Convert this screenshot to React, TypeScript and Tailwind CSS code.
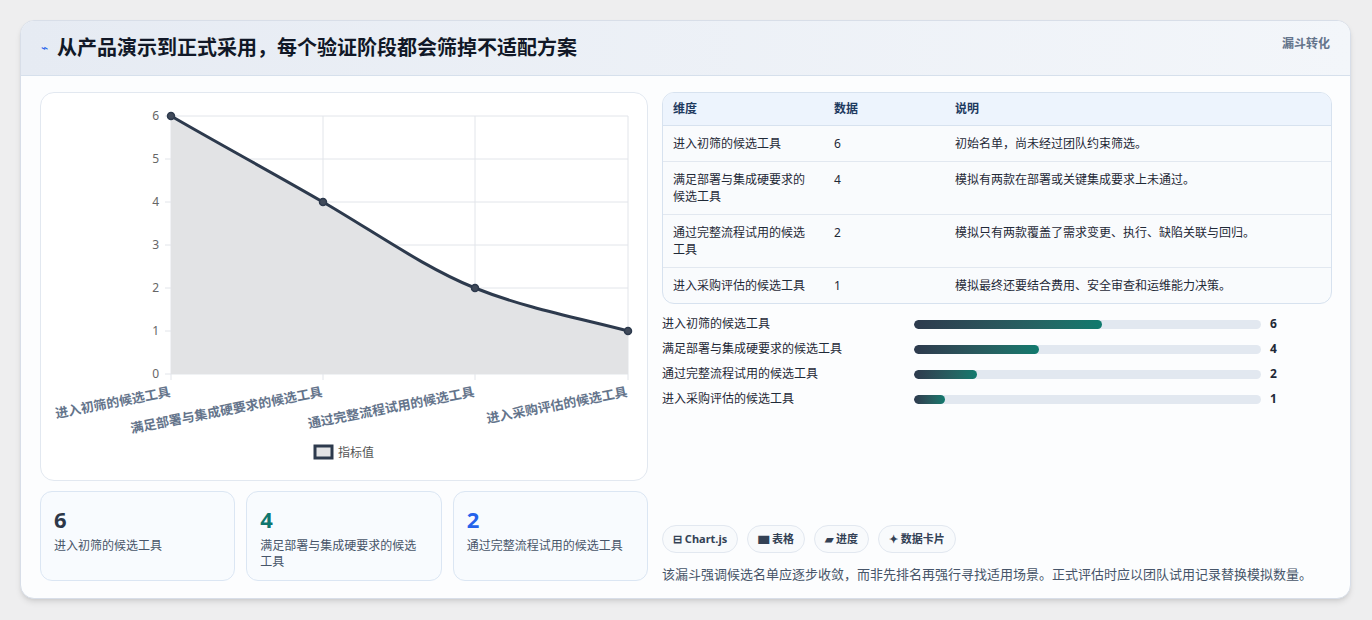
import React from "react";

const F = { fontFamily: '"Noto Sans","Noto Sans CJK SC",sans-serif' };
const rows = [
  ["进入初筛的候选工具", 6, "初始名单，尚未经过团队约束筛选。"],
  ["满足部署与集成硬要求的候选工具", 4, "模拟有两款在部署或关键集成要求上未通过。"],
  ["通过完整流程试用的候选工具", 2, "模拟只有两款覆盖了需求变更、执行、缺陷关联与回归。"],
  ["进入采购评估的候选工具", 1, "模拟最终还要结合费用、安全审查和运维能力决策。"],
] as const;

function Chart() {
  const xs = [130, 282, 434, 587];
  const y = (v: number) => 281 - v * 43;
  const pts = rows.map((r, i) => [xs[i], y(r[1])]);
  const d = "M130,23 C180,52 232,80 282,109 C332,138 384,175 434,195 C484,215 537,225 587,238";
  return (
    <svg width="607" height="388" className="block">
      {[0, 1, 2, 3, 4, 5, 6].map((v) => (
        <g key={v}>
          <line x1={124} x2={587} y1={y(v)} y2={y(v)} stroke="#e2e5ea" />
          <text x={118} y={y(v) + 4} textAnchor="end" fontSize="12" fill="#666">{v}</text>
        </g>
      ))}
      {xs.map((x) => (
        <line key={x} x1={x} x2={x} y1={23} y2={287} stroke="#e2e5ea" />
      ))}
      <path d={d + " L587,281 L130,281 Z"} fill="#e2e3e5" />
      <path d={d} fill="none" stroke="#2d3a4d" strokeWidth="3" />
      {pts.map(([px, py], i) => (
        <circle key={i} cx={px} cy={py} r="3.5" fill="#404a5a" stroke="#2d3a4d" strokeWidth="1.5" />
      ))}
      {rows.map((r, i) => (
        <text key={i} x={xs[i]} y={303} textAnchor="end" fontSize="13" fontWeight="600" fill="#64748b" transform={`rotate(-11 ${xs[i]} 303)`}>{r[0]}</text>
      ))}
      <rect x={274} y={353} width={17} height={12} fill="#e2e3e5" stroke="#2d3a4d" strokeWidth="3" />
      <text x={297} y={364} fontSize="12" fill="#555">指标值</text>
    </svg>
  );
}

export default function App() {
  return (
    <div style={F} className="w-[1372px] h-[620px] bg-[#eeeeef] pt-[20px] pl-[20px]">
      <div className="w-[1331px] h-[579px] bg-[#fcfdfe] rounded-[14px] border border-[#d8dee8] shadow-md overflow-hidden flex flex-col">
        <div className="h-[55px] shrink-0 flex items-center justify-between px-[20px] bg-gradient-to-r from-[#e6ebf3] to-[#f3f6fa] border-b border-[#d6e0ec]">
          <div className="flex items-center gap-[9px]">
            <span className="text-[#2563eb] text-[12px]">⌁</span>
            <span className="text-[20px] font-bold text-[#111827]">从产品演示到正式采用，每个验证阶段都会筛掉不适配方案</span>
          </div>
          <span className="text-[12px] font-bold text-[#64748b] -mt-[8px]">漏斗转化</span>
        </div>
        <div className="flex gap-[14px] pl-[19px] pr-[18px] pt-[16px]">
          <div className="w-[608px] flex flex-col gap-[10px]">
            <div className="h-[389px] rounded-[14px] border border-[#e2e8f0] bg-white"><Chart /></div>
            <div className="grid grid-cols-3 gap-[11px]">
              {[["6", "text-[#2d3748]", rows[0][0]], ["4", "text-[#0f766e]", rows[1][0]], ["2", "text-[#2563eb]", rows[2][0]]].map(([n, c, t]) => (
                <div key={n} className="h-[90px] rounded-[12px] border border-[#dbe6f3] bg-[#f8fbfe] px-[13px] pt-[12px]">
                  <div className={`text-[22px] font-bold leading-[30px] ${c}`}>{n}</div>
                  <div className="text-[12px] text-[#475569] leading-[16px] mt-[4px]">{t}</div>
                </div>
              ))}
            </div>
          </div>
          <div className="flex-1 flex flex-col">
            <div className="rounded-[12px] border border-[#d7e2ef] overflow-hidden bg-[#f9fbfd] text-[12px] text-[#1f2937]">
              <div className="flex h-[33px] items-center bg-[#edf4fd] border-b border-[#d7e2ef] font-bold text-[#1e3a5f]">
                <div className="w-[171px] pl-[10px]">维度</div><div className="w-[121px]">数据</div><div>说明</div>
              </div>
              {rows.map((r, i) => (
                <div key={i} className={`flex py-[9px] leading-[17px] ${i < 3 ? "border-b border-[#e2e8f0]" : ""} ${i === 1 || i === 2 ? "min-h-[53px]" : "min-h-[35px]"}`}>
                  <div className="w-[171px] shrink-0 pl-[10px] pr-[20px]">{r[0]}</div><div className="w-[121px] shrink-0">{r[1]}</div><div>{r[2]}</div>
                </div>
              ))}
            </div>
            <div className="flex flex-col gap-[7px] mt-[11px]">
              {rows.map((r, i) => (
                <div key={i} className="flex items-center h-[18px] text-[12px] text-[#1f2937]">
                  <div className="w-[252px]">{r[0]}</div>
                  <div className="w-[347px] h-[9px] rounded-full bg-[#e2e8f0] overflow-hidden">
                    <div className="h-full rounded-full bg-gradient-to-r from-[#2d3a4d] to-[#0f7a6e]" style={{ width: `${(r[1] / 6) * 54.2}%` }} />
                  </div>
                  <div className="ml-[9px] font-bold">{r[1]}</div>
                </div>
              ))}
            </div>
            <div className="flex gap-[9px] mt-[117px]">
              {["⊟ Chart.js", "▆ 表格", "▰ 进度", "✦ 数据卡片"].map((c) => (
                <span key={c} className="h-[28px] px-[10px] flex items-center rounded-full border border-[#e2e8f0] bg-[#f8fafc] text-[11px] font-bold text-[#334155]">{c}</span>
              ))}
            </div>
            <div className="mt-[12px] text-[13px] text-[#475569]">该漏斗强调候选名单应逐步收敛，而非先排名再强行寻找适用场景。正式评估时应以团队试用记录替换模拟数量。</div>
          </div>
        </div>
      </div>
    </div>
  );
}
